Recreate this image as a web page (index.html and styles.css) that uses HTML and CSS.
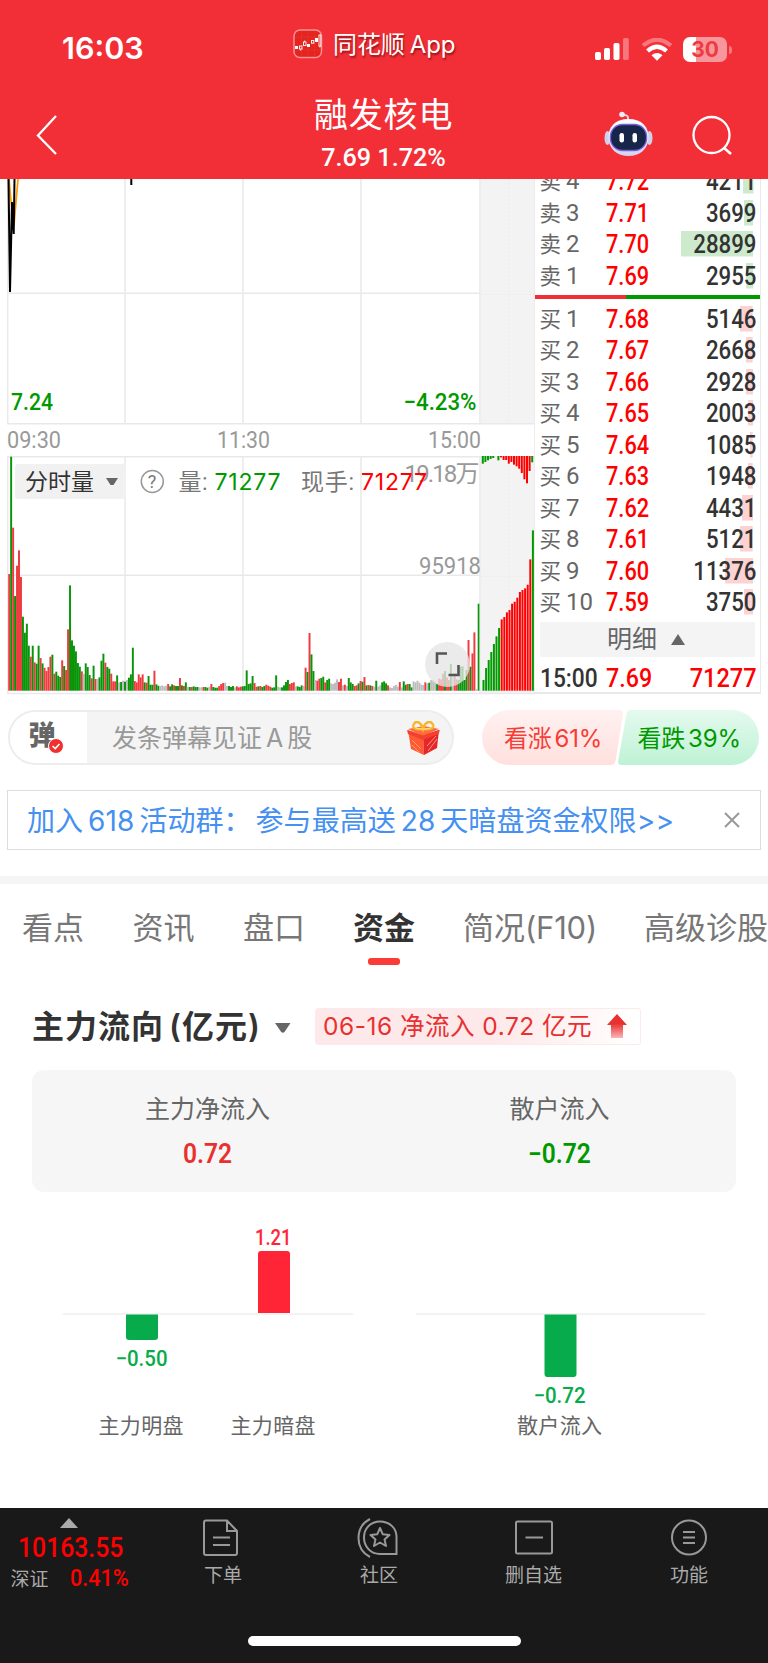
FILE: index.html
```html
<!DOCTYPE html>
<html lang="zh-CN">
<head>
<meta charset="utf-8">
<title>融发核电</title>
<link rel="stylesheet" href="styles.css">
</head>
<body>
<div class="app">
  <header class="header">
    <div class="status">
      <div class="clock">16:03</div>
      <div class="brand">
        <svg width="30" height="30" viewBox="0 0 30 30"><rect x="1" y="1" width="27.5" height="27.5" rx="6" fill="#e3241f" stroke="#fa9094" stroke-width="1.5"/><path d="M8.500 2v26M15 2v26M21.500 2v26M2 8h26M2 21h26" stroke="#ea3836" stroke-width=".5"/><path d="M2 17h3v3H2zM14 15h3v3h-3zM22 9h3v4h-3z" fill="#fff"/><g fill="none" stroke="#fff" stroke-width=".9"><rect x="6.500" y="17" width="2.500" height="3"/><rect x="10.500" y="13" width="2.500" height="3.500"/><rect x="18.500" y="11.500" width="2.300" height="2.700"/><rect x="26" y="6" width="1.800" height="11"/><path d="M7.700 20v1.500M11.700 11.500V13M26.900 17v1.500"/></g></svg>
        <span>同花顺<i></i>App</span>
      </div>
      <div class="signals">
        <svg width="34" height="23" viewBox="0 0 34 23"><g fill="#fff"><rect x="0" y="14" width="6" height="8" rx="1.700"/><rect x="9" y="10" width="6" height="12" rx="1.700"/><rect x="18.500" y="5" width="6" height="17" rx="1.700"/></g><rect x="28" y="0" width="5.800" height="22" rx="1.700" fill="#f8777c"/></svg>
        <svg width="32" height="23" viewBox="0 0 32 23"><path d="M2 7.500Q16-4 30 7.500" fill="none" stroke="#f8777c" stroke-width="4.200"/><path d="M6.500 13Q16 4.500 25.500 13" fill="none" stroke="#fff" stroke-width="4.200"/><path d="M10.500 17.200q5.500-4.600 11 0L16 22.700z" fill="#fff"/></svg>
        <div class="battery"><span>30</span></div>
      </div>
    </div>
    <div class="titlebar">
      <svg class="back" width="24" height="42" viewBox="0 0 24 42"><path d="M21 2 3 21.500 21 40" fill="none" stroke="#fff" stroke-width="2.300"/></svg>
      <div class="title"><h1>融发核电</h1><p>7.69 1.72%</p></div>
      <svg class="robot" width="50" height="46" viewBox="0 0 50 46">
        <defs><linearGradient id="hd" x2="0" y2="1"><stop stop-color="#fff"/><stop offset="1" stop-color="#d3d3ec"/></linearGradient></defs>
        <path d="M24 9V6.500Q24 4 19 3.800" fill="none" stroke="#e8d8ec" stroke-width="1.800"/><circle cx="18" cy="3.500" r="2.800" fill="#efe8f6"/>
        <ellipse cx="3.500" cy="27" rx="3" ry="7" fill="#cfd0ec"/><ellipse cx="45.500" cy="27" rx="3" ry="7" fill="#cfd0ec"/>
        <path d="M24.500 8C38 8 45 16 44.500 27S36 45 24.500 45 5 38 4.500 27 11 8 24.500 8z" fill="url(#hd)"/>
        <rect x="6.500" y="13.500" width="36" height="26" rx="12" fill="#172549" stroke="#765fe0" stroke-width="1.300"/>
        <rect x="15.500" y="22" width="4.500" height="9.500" rx="2.200" fill="#fff"/><rect x="28.500" y="22" width="4.500" height="9.500" rx="2.200" fill="#fff"/>
      </svg>
      <svg class="search" width="42" height="42" viewBox="0 0 42 42"><circle cx="20.500" cy="20" r="18" fill="none" stroke="#fff" stroke-width="2.300"/><path d="m32.500 32.500 7.500 6.500" stroke="#fff" stroke-width="2.600"/></svg>
    </div>
  </header>

  <main class="market">
    <svg id="chart" class="chart" width="535" height="516" viewBox="0 179 535 516">
      <rect x="481" y="179" width="54" height="245" fill="#f3f3f3"/>
      <rect x="481" y="457" width="54" height="236" fill="#f3f3f3"/>
      <g stroke="#e9e9e9" stroke-width="1.500" fill="none">
        <path d="M7.700 179V424M7.700 456V694M125 179V424M125 456V693M243 179V424M243 456V693M361 179V424M361 456V693M480 179V424M480 456V693M535 179V694"/>
        <path d="M7 293.300H480M7 423.700H535M7 456.700H535M7 575.300H480M7 693.500H535"/>
        <path d="M509 179V424M509 457V693M481 294.500H535M481 576.300H535" stroke-dasharray="1.500 2.500" stroke-width="1"/>
      </g>
      <path d="M9 179 11 201 14 225 18 179" fill="none" stroke="#f90" stroke-width="1.700"/>
      <path d="M8.500 179 10 292 12 202 13.700 234 14.500 179M131.300 179V185" fill="none" stroke="#000" stroke-width="2"/>
      <g id="bars"></g>
      <g class="axis">
        <text x="11" y="410" textLength="42" lengthAdjust="spacingAndGlyphs" fill="#090">7.24</text>
        <text x="403.500" y="410" textLength="73" lengthAdjust="spacingAndGlyphs" fill="#090">−4.23%</text>
        <text x="7" y="447.500" textLength="54" lengthAdjust="spacingAndGlyphs">09:30</text>
        <text x="217" y="447.500" textLength="53" lengthAdjust="spacingAndGlyphs">11:30</text>
        <text x="428" y="447.500" textLength="53" lengthAdjust="spacingAndGlyphs">15:00</text>
        <text x="404.500" y="482" textLength="75">19.18万</text>
        <text x="419" y="573.500" textLength="62" lengthAdjust="spacingAndGlyphs">95918</text>
      </g>
      <rect x="15" y="464" width="111" height="35" rx="3" fill="#f1f1f1"/>
      <g class="legend">
        <text x="25" y="490" textLength="69" fill="#333">分时量</text>
        <path d="M106 478h12l-4.500 7h-3z" fill="#666"/>
        <circle cx="152.300" cy="481.500" r="11" fill="none" stroke="#999" stroke-width="1.500"/>
        <text x="147.800" y="488" class="q">?</text>
        <text x="178.500" y="490" textLength="29">量:</text>
        <text x="214.500" y="489.500" textLength="66" class="num" fill="#090">71277</text>
        <text x="301" y="490" textLength="53">现手:</text>
        <text x="361" y="489.500" textLength="66" class="num" fill="#f00">71277</text>
      </g>
      <circle cx="447.500" cy="664.500" r="22.500" fill="#e6e6e6" fill-opacity=".78"/>
      <path d="M437 664V653.500H447M448.500 675H458.500V665" fill="none" stroke="#555" stroke-width="2.600"/>
    </svg>

    <section class="book">
      <div class="sell">
        <div class="row" style="--w:10.500px"><span>卖<b>4</b></span><em>7.72</em><strong>4211</strong></div>
        <div class="row" style="--w:9px"><span>卖<b>3</b></span><em>7.71</em><strong>3699</strong></div>
        <div class="row" style="--w:72px"><span>卖<b>2</b></span><em>7.70</em><strong>28899</strong></div>
        <div class="row" style="--w:7px"><span>卖<b>1</b></span><em>7.69</em><strong>2955</strong></div>
      </div>
      <div class="ratio"></div>
      <div class="buy">
        <div class="row" style="--w:12.700px"><span>买<b>1</b></span><em>7.68</em><strong>5146</strong></div>
        <div class="row" style="--w:6.700px"><span>买<b>2</b></span><em>7.67</em><strong>2668</strong></div>
        <div class="row" style="--w:7.300px"><span>买<b>3</b></span><em>7.66</em><strong>2928</strong></div>
        <div class="row" style="--w:5px"><span>买<b>4</b></span><em>7.65</em><strong>2003</strong></div>
        <div class="row" style="--w:2.700px"><span>买<b>5</b></span><em>7.64</em><strong>1085</strong></div>
        <div class="row" style="--w:4.700px"><span>买<b>6</b></span><em>7.63</em><strong>1948</strong></div>
        <div class="row" style="--w:11px"><span>买<b>7</b></span><em>7.62</em><strong>4431</strong></div>
        <div class="row" style="--w:12.700px"><span>买<b>8</b></span><em>7.61</em><strong>5121</strong></div>
        <div class="row" style="--w:28px"><span>买<b>9</b></span><em>7.60</em><strong>11376</strong></div>
        <div class="row" style="--w:9px"><span>买<b>10</b></span><em>7.59</em><strong>3750</strong></div>
      </div>
      <div class="detail">明细<svg width="14" height="11" viewBox="0 0 14 11"><path d="M0 11 7 0l7 11z" fill="#666"/></svg></div>
      <div class="row last"><span>15:00</span><em>7.69</em><strong>71277</strong></div>
    </section>
  </main>

  <section class="danmu">
    <div class="input">
      <div class="toggle">弹<svg width="16" height="16" viewBox="0 0 16 16"><circle cx="8" cy="8" r="7.500" fill="#f0322f" stroke="#fff"/><path d="m4.500 8 2.700 2.600L11.500 6" fill="none" stroke="#fff" stroke-width="1.700"/></svg></div>
      <div class="hint">发条弹幕见证<i></i>A<i></i>股</div>
      <svg class="gift" width="33" height="35" viewBox="0 0 33 35">
        <path d="M1 9 16 14 17 34 4 28z" fill="#ff5a34"/><path d="M32 9 16 14 17 34 30 27z" fill="#e5262a"/><path d="M1 8 17 5 32 8 16 15z" fill="#ff6b3f"/><path d="M0 9 16 14.500V19L1 13zM33 9 16 14.500V19L31.500 13z" fill="#f3402f"/>
        <path d="m5 19 9 9M5 24l7 7M21 30l9-12M20 25l9-10" stroke="#ff9a6a" stroke-width="1"/>
        <path d="M16 8C8 9 5 7 7 3s7-2 9 5c2-7 7-9 9.500-5S24 9 16 8z" fill="none" stroke="#f7b52c" stroke-width="2.600"/><path d="M16 8C9 8 6 6 8 3.500M16 8c8 0 10-2 8.500-4.500" fill="none" stroke="#fff0a8" stroke-width=".8"/>
      </svg>
    </div>
    <div class="poll">
      <svg width="278" height="55" viewBox="0 0 279 55" preserveAspectRatio="none"><defs><linearGradient id="up" x2="0" y2="1"><stop stop-color="#fff1f0"/><stop offset="1" stop-color="#ffe0de"/></linearGradient><linearGradient id="dn" x2="0" y2="1"><stop stop-color="#e5faef"/><stop offset="1" stop-color="#bef2d4"/></linearGradient></defs><path d="M27.500 0H138q4 0 3.500 4L134 51q-.7 4-5 4H27.500a27.500 27.500 0 0 1 0-55z" fill="url(#up)"/><path d="M149.500 0h101a27.500 27.500 0 0 1 0 55H140q-4 0-3.300-4L145 4q.6-4 4.500-4z" fill="url(#dn)"/></svg>
      <span class="bull">看涨<b>61%</b></span><span class="bear">看跌<b>39%</b></span>
    </div>
  </section>

  <section class="promo"><span>加入<i></i>618<i></i>活动群：<i class="thin"></i>参与最高送<i></i>28<i></i>天暗盘资金权限<u>&gt;&gt;</u></span><svg width="16" height="16" viewBox="0 0 16 16"><path d="m1 1 14 14M15 1 1 15" stroke="#999" stroke-width="2"/></svg></section>

  <nav class="tabs"><span>看点</span><span>资讯</span><span>盘口</span><span class="on">资金</span><span>简况<b>(F10)</b></span><span>高级诊股</span></nav>

  <section class="flow">
    <div class="flow-head">
      <h2>主力流向<i></i>(亿元)</h2>
      <svg class="caret" width="16" height="10" viewBox="0 0 16 10"><path d="M0 0h15.500L9.500 9q-1.700 1.500-3.300 0z" fill="#666"/></svg>
      <div class="tag"><span>06-16 净流入 0.72 亿元</span><svg width="20" height="25" viewBox="0 0 20 25"><defs><linearGradient id="ar" x2="0" y2="1"><stop stop-color="#e93030"/><stop offset=".4" stop-color="#e93030"/><stop offset="1" stop-color="#f9b5b5"/></linearGradient></defs><path d="M10 0 20 11h-4v13H4V11H0z" fill="url(#ar)"/></svg></div>
    </div>
    <div class="card">
      <div><span>主力净流入</span><b class="red">0.72</b></div>
      <div><span>散户流入</span><b class="green">−0.72</b></div>
    </div>
    <svg class="flowchart" width="768" height="316" viewBox="0 1192 768 316">
      <path d="M63 1314H353M416 1314H705" stroke="#f0f0f0" stroke-width="1.500"/>
      <path d="M258 1313V1254q0-3 3-3H287q3 0 3 3V1313z" fill="#ff2436"/>
      <path d="M126 1314.500V1337q0 3 3 3h26q3 0 3-3v-22.500zM544.500 1314.500V1374q0 3 3 3h26q3 0 3-3v-59.500z" fill="#07ab4b"/>
      <g class="vals"><text x="255" y="1245" textLength="36.500" lengthAdjust="spacingAndGlyphs" fill="#ff2436">1.21</text><text x="115.500" y="1366" textLength="52" lengthAdjust="spacingAndGlyphs" fill="#07ab4b">−0.50</text><text x="533.500" y="1402.500" textLength="52" lengthAdjust="spacingAndGlyphs" fill="#07ab4b">−0.72</text></g>
      <g class="names"><text x="98.500" y="1433" textLength="85">主力明盘</text><text x="230.500" y="1433" textLength="85">主力暗盘</text><text x="517" y="1433" textLength="85">散户流入</text></g>
    </svg>
  </section>

  <footer class="bottom">
    <div class="index">
      <svg width="18" height="10" viewBox="0 0 18 10"><path d="M0 10 9 0l9 10z" fill="#aaa"/></svg>
      <strong>10163.55</strong>
      <p><span>深证</span><b>0.41%</b></p>
    </div>
    <div class="item"><svg class="order" width="36" height="38" viewBox="0 0 36 38"><path d="M3 1.500H24L34 12V34q0 2-2 2H3q-2 0-2-2V3.500q0-2 2-2zM24 2V12H34M10 18.500H27M10 26H27"/></svg>下单</div>
    <div class="item"><svg class="club" width="41" height="40" viewBox="0 0 41 40"><path d="M23 3.500c9.500 0 16.500 6.500 16.500 15.500V36H23C13.500 36 7 28.500 7 19.500S13.500 3.500 23 3.500zM13 1Q1.500 7 1.500 20T13 39"/><path d="m23 10 2.800 6.300 6.700.6-5 4.500 1.500 6.600-6-3.500-6 3.500 1.500-6.600-5-4.500 6.700-.6z" stroke-linejoin="round"/></svg>社区</div>
    <div class="item"><svg width="38" height="38" viewBox="0 0 38 38"><rect x="1" y="2.500" width="36" height="32" rx="1.500"/><path d="M10.500 18.500H28"/></svg>删自选</div>
    <div class="item"><svg width="38" height="38" viewBox="0 0 38 38"><circle cx="19" cy="18.500" r="17"/><path d="M13 13H25M13 18.500H25M13 24H25"/></svg>功能</div>
    <div class="home"></div>
  </footer>
</div>
<script src="script.js"></script>
</body>
</html>
```
FILE: styles.css
```css
* { box-sizing: border-box; margin: 0; padding: 0; }
body { width: 768px; background: #fff; font-family: Roboto, "Noto Sans CJK SC", sans-serif; white-space: nowrap; overflow: hidden; }
.app { width: 768px; height: 1663px; display: flex; flex-direction: column; }
svg { display: block; flex: none; }
i, em { font-style: normal; }
i { display: inline-block; width: 5px; }

.header { height: 179px; background: #f22f37; color: #fff; }
.status { height: 90px; display: grid; grid-template-columns: 293px 301px 1fr; }
.clock { padding: 32px 0 0 62px; font: 600 30.500px/32px Inter, sans-serif; }
.brand { display: flex; gap: 10px; padding-top: 29px; font: 400 24px/32px Inter, "Noto Sans CJK SC", sans-serif; letter-spacing: -.1px; text-shadow: 1px 2px 2px rgba(90,0,0,.6); }
.signals { display: flex; gap: 11.500px; padding: 38px 0 0 1px; }
.battery { width: 44px; height: 25px; margin: -1.500px 0 0 -1px; border-radius: 7px; background: linear-gradient(90deg, #fff 13px, #f8979b 13px); color: #ee3a40; font: 700 21px/25px Inter, sans-serif; text-align: center; position: relative; }
.battery::after { content: ""; position: absolute; right: -5px; top: 9px; width: 3px; height: 8px; border-radius: 0 3px 3px 0; background: #f8777c; }
.titlebar { height: 89px; display: grid; grid-template-columns: 35px 279px 290px 87px 1fr; }
.back, .title, .robot, .search { grid-row: 1; }
.back { grid-column: 2; margin-top: 24px; }
.title { grid-column: 3; width: 139px; text-align: center; }
.robot { grid-column: 4; margin-top: 21px; }
.search { grid-column: 5; margin-top: 25px; }
.title h1 { font-weight: 400; font-size: 34px; line-height: 40px; letter-spacing: .8px; margin-top: 5px; }
.title p { font-weight: 500; font-size: 26.500px; line-height: 30px; margin: 6.500px -20px 0; transform: scaleX(.95); }

.market { height: 516px; display: flex; overflow: hidden; }
.axis text { font: 400 24px Roboto, "Noto Sans CJK SC", sans-serif; fill: #999; }
.axis text[fill] { fill: #090; font-weight: 500; }
.legend text { font: 400 23px Roboto, "Noto Sans CJK SC", sans-serif; }
.legend text:not([fill]) { fill: #777; }
.legend .q { font-size: 18px; fill: #999; }
.legend .num { font: 400 23px Inter, Roboto, sans-serif; }

.book { width: 226px; height: 515px; border-right: 1.500px solid #e9e9e9; border-bottom: 2px solid #e9e9e9; overflow: hidden; }
.sell { margin-top: -13.600px; --c: #cdeacd; }
.buy { margin-top: 4px; --c: #fcd2d2; }
.row { height: 31.500px; display: grid; grid-template-columns: 66px 60px 1fr; padding: 0 4px 0 4.500px; line-height: 33px; background: linear-gradient(var(--c), var(--c)) right 7px top 3px / var(--w, 0) 25.500px no-repeat; }
.row span { font-size: 21.500px; color: #666; line-height: 32px; }
.row span b { font-weight: 400; margin-left: 5px; font-size: 24px; }
.row em { color: #f00; font-weight: 500; font-size: 25px; transform: scaleX(.87); transform-origin: left; }
.row strong { color: #333; font-weight: 500; font-size: 25px; transform: scaleX(.89); transform-origin: right; text-align: right; }
.ratio { height: 4px; margin-top: 3.400px; background: linear-gradient(90deg, #f22f37 91px, #090 91px); }
.detail { height: 35px; margin: 4px 5px 0; background: #f4f4f4; color: #666; font-size: 25px; line-height: 35px; display: flex; align-items: center; padding-left: 67px; gap: 14px; }
.last { margin-top: 4.500px; line-height: 35px; background: none; }
.last span { font-size: 25px; line-height: 35px; font-weight: 500; color: #333; transform: scaleX(.91); transform-origin: left; }
.last em { transform: scaleX(.93); }
.last strong { color: #f00; transform: scaleX(.94); }

.danmu { height: 95px; padding: 15.500px 8px 0; display: flex; gap: 28px; }
.input { width: 447px; height: 55px; border: 2px solid #ededed; border-radius: 28px; background: #f4f4f4; display: flex; overflow: hidden; }
.toggle { width: 77px; background: #fff; color: #666; font-weight: 900; font-size: 27px; line-height: 49px; padding-left: 18.500px; position: relative; }
.toggle svg { position: absolute; left: 38px; top: 26px; }
.hint { width: 321px; padding-left: 25px; font: 400 25px/53px Inter, "Noto Sans CJK SC", sans-serif; color: #999; }
.hint i { width: 4px; }
.gift { margin: 9px 0 0 -1px; }
.poll { position: relative; width: 278px; }
.poll span { position: absolute; top: 0; font: 400 24px/58px Inter, "Noto Sans CJK SC", sans-serif; letter-spacing: -.2px; }
.poll b { font-weight: 400; margin-left: 3px; }
.bull { left: 22px; color: #f93c35; }
.bear { left: 155.500px; color: #090; }

.promo { height: 60px; margin: .500px 7px 0; border: 1.500px solid #ddd; display: flex; align-items: center; justify-content: space-between; padding: 0 20px 0 19px; font: 400 28px/62px Inter, "Noto Sans CJK SC", sans-serif; color: #4590f0; letter-spacing: .05px; }
.promo > span { padding-top: 1px; }
.promo .thin { width: 4px; }
.promo u { text-decoration: none; letter-spacing: .3px; }

.tabs { margin-top: 26px; height: 112px; border-top: 8px solid #f5f5f5; display: grid; grid-template-columns: 110.500px 110.500px 110px 110px 181px 130px; padding-left: 22px; overflow: hidden; color: #777; font: 400 31px/88px Inter, "Noto Sans CJK SC", sans-serif; }
.tabs b { font-weight: 400; letter-spacing: -.2px; }
.tabs .on { color: #333; font-weight: 700; position: relative; }
.tabs .on::after { content: ""; position: absolute; left: 15px; top: 74px; width: 32px; height: 6.500px; border-radius: 3px; background: #f93c35; }

.flow-head { height: 82px; padding: 19.500px 32px 0; display: flex; align-items: flex-start; }
h2 { width: 243px; font: 600 32px/38px Inter, "Noto Sans CJK SC", sans-serif; color: #333; letter-spacing: 1px; }
.caret { margin-top: 15px; }
.tag { width: 326px; height: 37px; margin-left: 24px; padding: 0 13px 0 7px; border: 1px solid #fdeaea; border-radius: 3px; background: linear-gradient(90deg, #fde9e9 55%, #fff); color: #e93030; font: 400 24.500px/36px Inter, "Noto Sans CJK SC", sans-serif; letter-spacing: .500px; display: flex; align-items: center; justify-content: space-between; }
.card { height: 122px; margin: 0 32px; background: #f6f6f6; border-radius: 12px; display: grid; grid-template-columns: 351px 353px; text-align: center; }
.card div { display: flex; flex-direction: column; padding-top: 22px; }
.card span { font-size: 25px; line-height: 36px; color: #666; }
.card b { font-size: 27px; line-height: 30px; margin-top: 10.500px; font-weight: 600; transform: scaleX(.91); }
.red { color: #e93030; }
.green { color: #090; }
.vals { font: 500 21.500px Roboto, sans-serif; }
.names { font: 400 21px "Noto Sans CJK SC", sans-serif; fill: #666; }

.bottom { height: 155px; background: #191919; color: #aaa; display: grid; grid-template-columns: 145px 156px 156px 153px 158px; grid-template-rows: 128px 10px; font-size: 19px; }
.item { display: flex; flex-direction: column; align-items: center; padding-top: 9.500px; line-height: 28px; }
.item svg { fill: none; stroke: #999; stroke-width: 2; height: 40px; margin-bottom: 4px; }
.item .order { margin-right: 4px; }
.item .club { margin-right: 3px; }
.index { padding-top: 10px; }
.index svg { margin-left: 60px; }
.index strong { display: block; margin-left: 18px; font-size: 27.500px; line-height: 32px; margin-top: 3.500px; font-weight: 500; color: #f00; transform: scaleX(.9); transform-origin: left; }
.index p { display: flex; margin-left: 10.500px; gap: 21px; line-height: 29px; margin-top: 1.500px; }
.index b { color: #f00; font-weight: 500; font-size: 23px; line-height: 28px; transform: scaleX(.94); transform-origin: left; }
.home { grid-column: 1 / -1; width: 273px; height: 10px; margin-left: 248px; background: #fff; border-radius: 5px; }
```
FILE: script.js
```js
// Each entry is a colour (r, g, x = grey) and a height in thirds of a pixel.
const volume = `r350 g702 r489 g284 r375 r421 r341 g222 g174 g201 g135 r102 g135 r85 g81 g135 r98 g82 r69 r59
r71 r102 g108 r51 g57 g45 g41 r91 g74 r62 r184 g316 g151 g135 g118 g83 g72 r58 x50 g82
g71 g47 r37 g75 r35 x35 g40 g90 g111 r84 g71 g66 r51 r28 r28 g46 x25 g26 x30 g27
x32 g39 g49 g129 r29 r25 r49 r40 r49 g25 r24 g44 g18 g18 r60 g19 g15 x14 x16 x13
x15 r20 g13 g19 r16 g14 g14 r38 g16 r14 g25 x11 g11 r11 g13 g11 g11 x10 x10 r11
g11 g9 x12 r20 g11 g9 g9 r14 r20 r23 x24 x14 g14 g11 g14 x10 r13 r10 r12 g13
g14 g61 g20 g22 g44 r23 r12 g13 r14 g11 g14 r18 r15 r12 g9 g10 g46 x12 x10 g10
g16 g26 g32 r20 r23 r25 x13 g13 g11 g16 x14 r69 g56 r173 g109 g59 x32 r30 r36 g38
g42 r25 g32 g36 x22 x20 x24 x34 r26 r36 x16 r18 x14 g38 g25 g20 r14 r16 g22 r29
g27 r41 g16 r17 g16 r14 x12 g30 x12 x16 g25 g28 g22 r16 x10 x8 x14 x18 x12 r26
x10 g28 g18 r20 g20 g10 x28 x25 x30 x24 x18 x17 r25 x22 g24 x32 x33 x28 g21 r36
r34 r51 g59 r40 r32 g80 x46 r51 r34 g32 g72 g73 g32 g62 r152 g72 r112 r175 x5`.split(/\s+/);
const book = [32, 68, 92, 116, 140, 163, 188, 214, 221, 235, 242, 261, 267, 279, 296, 302, 307, 318, 394, 481];
const book2 = [23, 18, 13, 9, 6, 0, 13, 4, 12, 12, 23, 18, 26, 31, 38, 51, 70, 82, 45, 19];
const tone = { r: '#ef3b3f', g: '#0a940a', x: '#bdbdbd' };
const parts = [];
const bar = (x, y, w, h, c) => parts.push(`<rect x="${x.toFixed(2)}" y="${y.toFixed(2)}" width="${w}" height="${h.toFixed(2)}" fill="${c}"/>`);

volume.forEach((v, i) => {
  const h = Number(v.slice(1)) / 3;
  bar(8.2 + i * 1.963, 690.7 - h, 1.96, h, tone[v[0]]);
});
bar(477.700, 603.700, 1.700, 87, tone.g);
book.forEach((v, i) => bar(482.5 + i * 2.6, 690.7 - v / 3, 2, v / 3, i < 7 || i === 19 ? '#090' : '#f00'));
book2.forEach((v, i) => bar(481.8 + i * 2.6, 456, 2, v / 3, i < 7 || i === 19 ? '#090' : '#f00'));
document.getElementById('bars').innerHTML = parts.join('');
```
